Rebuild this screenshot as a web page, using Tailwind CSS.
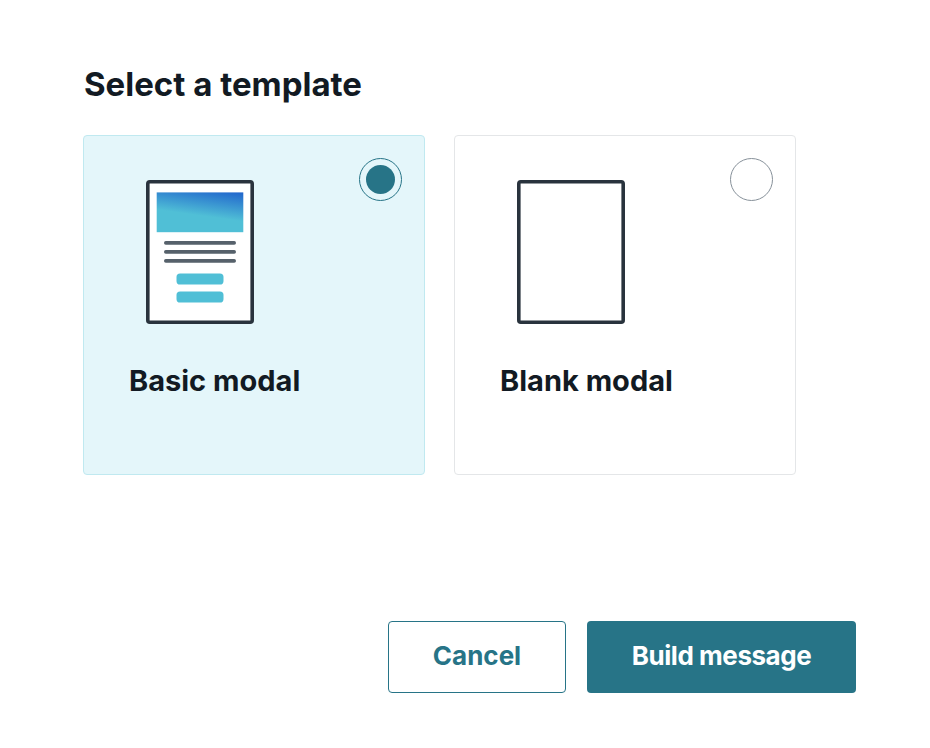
<!DOCTYPE html>
<html lang="en">
<head>
<meta charset="utf-8">
<title>Select a template</title>
<script src="https://cdn.jsdelivr.net/npm/@tailwindcss/browser@4"></script>
</head>
<body class="bg-white font-['Inter',sans-serif] text-[#121a23]">
<main class="flex h-[748px] w-[930px] flex-col pt-[63px] pl-[83px] pr-[74px] overflow-hidden">
  <h1 class="h-[72px] pl-px whitespace-nowrap text-[33px] leading-[42px] font-bold">Select a template</h1>
  <div class="flex gap-[29px]">
    <label class="flex h-[340px] w-[342px] justify-between rounded-[4px] border border-[#c0e9f0] bg-[#e4f6fa] pt-[44px] pr-[22px] pl-[45px]">
      <span class="flex flex-col">
        <svg class="ml-[17px]" width="108" height="144" viewBox="0 0 108 144">
          <defs>
            <linearGradient id="banner" gradientUnits="userSpaceOnUse" x1="98" y1="12" x2="94" y2="41">
              <stop offset="0" stop-color="#2063cc"/>
              <stop offset="1" stop-color="#50bfd6"/>
            </linearGradient>
          </defs>
          <rect x="1.8" y="1.8" width="104.4" height="140.4" rx="2" fill="#fff" stroke="#29333d" stroke-width="3.6"/>
          <rect x="10.7" y="12.4" width="86.6" height="39.8" fill="url(#banner)"/>
          <path d="M19.8 62.9H88.2M19.8 71.9H88.2M19.8 80.9H88.2" stroke="#56616b" stroke-width="3.6" stroke-linecap="round"/>
          <rect x="30.5" y="93.5" width="47" height="11" rx="3.6" fill="#50bfd6"/>
          <rect x="30.5" y="111.5" width="47" height="11" rx="3.6" fill="#50bfd6"/>
        </svg>
        <span class="mt-[37px] whitespace-nowrap text-[29px] leading-[40px] font-bold">Basic modal</span>
      </span>
      <span class="-mt-[22px] -ml-20 flex size-[43px] shrink-0 items-center justify-center rounded-full border border-[#277487]"><span class="size-[29px] rounded-full bg-[#277487]"></span></span>
    </label>
    <label class="flex h-[340px] w-[342px] justify-between rounded-[4px] border border-[#e4e6e8] bg-white pt-[44px] pr-[22px] pl-[45px]">
      <span class="flex flex-col">
        <svg class="ml-[17px]" width="108" height="144" viewBox="0 0 108 144">
          <rect x="1.8" y="1.8" width="104.4" height="140.4" rx="2" fill="#fff" stroke="#29333d" stroke-width="3.6"/>
        </svg>
        <span class="mt-[37px] whitespace-nowrap text-[29px] leading-[40px] font-bold">Blank modal</span>
      </span>
      <span class="-mt-[22px] -ml-20 size-[43px] shrink-0 rounded-full border border-[#87919a]"></span>
    </label>
  </div>
  <div class="mt-[146px] flex justify-end gap-[21px] text-[26px] font-bold">
    <button class="h-[72px] w-[178px] rounded-[4px] border border-[#277487] pb-[3px] whitespace-nowrap text-[#277487]">Cancel</button>
    <button class="h-[72px] w-[269px] rounded-[4px] bg-[#277487] pb-[3px] whitespace-nowrap tracking-[-0.45px] text-white">Build message</button>
  </div>
</main>
</body>
</html>
